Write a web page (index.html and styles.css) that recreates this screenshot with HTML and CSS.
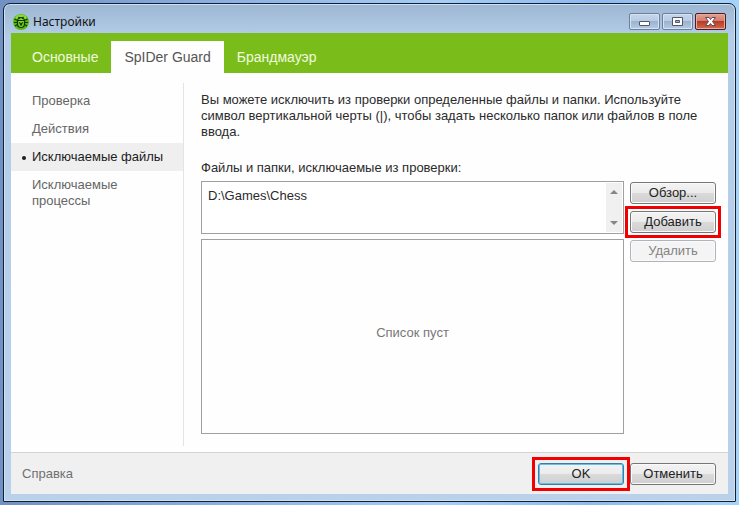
FILE: index.html
```html
<!DOCTYPE html>
<html lang="ru">
<head>
  <meta charset="UTF-8" />
  <meta name="viewport" content="width=device-width, initial-scale=1.0" />
  <title>Настройки</title>
  <link rel="stylesheet" href="styles.css">
</head>
<body>
  <div class="window">
    <!-- Title Bar -->
    <header class="title-bar">
      <svg class="app-icon" viewBox="0 0 16 16" aria-hidden="true">
        <circle cx="8" cy="8" r="8" fill="#58b80c" />
        <ellipse cx="8" cy="3.500" rx="5.500" ry="3" fill="#8ad83c" />
        <path d="M4.500 7.500C4.500 4.500 6 3.500 8 3.500s3.500 1 3.500 4v2C11.500 12 10 13.500 8 13.500S4.500 12 4.500 9.500z" fill="#7fd42a" stroke="#123a08" stroke-width="1.200" />
        <path d="M4.500 6.500h7M5.500 3l1.500 1.500M10.500 3L9 4.500M1.500 5l3 1.500M14.500 5l-3 1.500M1 8.500h3.500M15 8.500h-3.500M2 12l2.500-1.500M14 12l-2.500-1.500" fill="none" stroke="#123a08" stroke-width="1.200" />
        <path d="M6 8.500l1.500 1v2M10 8.500l-1.500 1v2" fill="none" stroke="#123a08" stroke-width="1.200" />
      </svg>
      <h1 class="title">Настройки</h1>
      <div class="window-buttons">
        <button class="window-btn" aria-label="Свернуть">
          <svg width="29" height="15" viewBox="0 0 29 15"><rect x="9.500" y="7.500" width="10" height="4" rx="0.500" fill="#fff" stroke="#535666" /></svg>
        </button>
        <button class="window-btn" aria-label="Развернуть">
          <svg width="29" height="15" viewBox="0 0 29 15"><path d="M9.500 3.500h10v8h-10zM12.500 6.500v2h4v-2z" fill="#fff" fill-rule="evenodd" stroke="#535666" /></svg>
        </button>
        <button class="window-btn close-btn" aria-label="Закрыть">
          <svg width="29" height="15" viewBox="0 0 29 15"><path d="M9.500 3.500h3.500l1.500 2 1.500-2h3.500l-3 4 3 4H16l-1.500-2-1.500 2H9.500l3-4z" fill="#fff" stroke="#5c4a58" /></svg>
        </button>
      </div>
    </header>

    <div class="client">
      <!-- Tabs -->
      <nav class="tabs">
        <a class="tab" href="#">Основные</a>
        <a class="tab active" href="#">SpIDer Guard</a>
        <a class="tab" href="#">Брандмауэр</a>
      </nav>

      <div class="content">
        <!-- Sections -->
        <nav class="sidebar">
          <a class="section" href="#">Проверка</a>
          <a class="section" href="#">Действия</a>
          <a class="section active" href="#">Исключаемые файлы</a>
          <a class="section" href="#">Исключаемые процессы</a>
        </nav>

        <main class="panel">
          <p class="description">Вы можете исключить из проверки определенные файлы и папки. Используйте символ вертикальной черты (|), чтобы задать несколько папок или файлов в поле ввода.</p>
          <label class="field-label" for="paths">Файлы и папки, исключаемые из проверки:</label>
          <div class="exclusions">
            <div class="lists">
              <div class="path-box">
                <textarea class="path-input" id="paths" spellcheck="false">D:\Games\Chess</textarea>
                <div class="scrollbar" aria-hidden="true">
                  <svg width="8" height="4" viewBox="0 0 8 4"><path d="M0 4l4-4 4 4z" fill="#868686" /></svg>
                  <svg width="8" height="4" viewBox="0 0 8 4"><path d="M0 0l4 4 4-4z" fill="#868686" /></svg>
                </div>
              </div>
              <div class="excluded-list">Список пуст</div>
            </div>
            <div class="actions">
              <button class="btn">Обзор...</button>
              <span class="highlight"><button class="btn">Добавить</button></span>
              <button class="btn" disabled>Удалить</button>
            </div>
          </div>
        </main>
      </div>

      <!-- Bottom Bar -->
      <footer class="footer">
        <a class="help" href="#">Справка</a>
        <span class="highlight wide"><button class="btn default">OK</button></span>
        <button class="btn">Отменить</button>
      </footer>
    </div>
  </div>
</body>
</html>
```
FILE: styles.css
```css
* {
  box-sizing: border-box;
}

body {
  margin: 0;
  height: 100vh;
  padding: 3px;
  display: flex;
  font-family: "Liberation Sans", Arial, sans-serif;
  font-size: 13px;
  line-height: 16px;
  color: #2b2b2b;
  background: linear-gradient(90deg, #7190c4, #8cb0e4 30%, #a5cdf8 60%, #8fb9f2 80%, #a5d4fa);
}

a {
  color: inherit;
  text-decoration: none;
}

button,
textarea {
  font: inherit;
  color: inherit;
}

.window {
  flex: 1;
  display: flex;
  flex-direction: column;
  padding: 0 7px 7px;
  border: 1px solid #14202e;
  border-radius: 7px 7px 1px 1px;
  background: linear-gradient(#9db7d3, #b3cce8 32px, #b9d1ea);
  box-shadow: inset 0 0 0 1px #cfe2f4;
}

/* Title bar */
.title-bar {
  height: 29px;
  display: flex;
  align-items: center;
  padding: 6px 2px 0;
}

.app-icon {
  width: 16px;
  height: 16px;
}

.title {
  flex: 1;
  margin: 0 0 0 4px;
  font-family: "Noto Sans", sans-serif;
  font-size: 12px;
  font-weight: normal;
  color: #111;
}

.window-buttons {
  display: flex;
  gap: 2px;
}

.window-btn {
  width: 31px;
  height: 17px;
  padding: 0;
  display: flex;
  align-items: center;
  justify-content: center;
  border: 1px solid #6b7f9b;
  border-radius: 2px;
  background: linear-gradient(#c6d7ea, #b6cae1 50%, #9bb3d0 50%, #b4cbe4);
  box-shadow: inset 0 0 0 1px #d5e3f2;
}

.window-btn svg {
  flex: none;
}

.close-btn {
  border-color: #4d1b22;
  background: linear-gradient(#e2a094, #d37a69 50%, #bb3a24 50%, #cf6c50);
  box-shadow: inset 0 0 0 1px #e5aca0;
}

/* Client area */
.client {
  flex: 1;
  display: flex;
  flex-direction: column;
  background: #fefefe;
}

.tabs {
  height: 40px;
  padding: 8px 8px 0;
  display: flex;
  background: #7abd1a;
}

.tab {
  padding: 8px 13px;
  font-size: 14px;
  color: #f0fadf;
}

.tab.active {
  color: #555;
  background: #fefefe;
}

.content {
  flex: 1;
  display: flex;
}

.sidebar {
  width: 173px;
  margin: 10px 0 6px;
  padding-top: 4px;
  border-right: 1px solid #e4e4e4;
}

.section {
  display: block;
  padding: 6px 12px 6px 21px;
  color: #666;
}

.section.active {
  position: relative;
  color: #1c1c1c;
  background: #efefef;
}

.section.active::before {
  content: "";
  position: absolute;
  left: 11px;
  top: 13px;
  width: 4px;
  height: 4px;
  border-radius: 50%;
  background: #1c1c1c;
}

.panel {
  flex: 1;
  display: flex;
  flex-direction: column;
  padding: 19px 12px 18px 17px;
}

.description {
  margin: 0 0 20px;
}

.field-label {
  margin-bottom: 5px;
}

.exclusions {
  flex: 1;
  display: flex;
  gap: 6px;
}

.lists {
  flex: 1;
  display: flex;
  flex-direction: column;
  gap: 5px;
}

.path-box {
  height: 53px;
  display: flex;
  padding: 1px;
  border: 1px solid #a0a0a0;
  background: #fff;
}

.path-input {
  flex: 1;
  padding: 5px;
  border: none;
  outline: none;
  resize: none;
  overflow: hidden;
  background: none;
}

.scrollbar {
  width: 16px;
  padding: 7px 0;
  display: flex;
  flex-direction: column;
  align-items: center;
  justify-content: space-between;
  background: #f0f0f0;
}

.excluded-list {
  flex: 1;
  display: flex;
  align-items: center;
  justify-content: center;
  padding-bottom: 8px;
  border: 1px solid #a0a0a0;
  color: #777;
}

.actions {
  display: flex;
  flex-direction: column;
  gap: 7px;
  padding-top: 1px;
}

/* Buttons */
.btn {
  display: block;
  width: 86px;
  height: 22px;
  padding: 0;
  border: 1px solid #777;
  border-radius: 3px;
  color: #222;
  background: linear-gradient(#f3f3f3, #ebebeb 50%, #dadada 50%, #d0d0d0);
  box-shadow: inset 0 0 0 1px #fafafa;
}

.btn.default {
  border-color: #3a7ea8;
  box-shadow: inset 0 0 0 1px #5cc2ea;
}

.btn:disabled {
  border-color: #b0b4b8;
  color: #838383;
  background: #f4f4f4;
}

.highlight {
  position: relative;
  z-index: 1;
  outline: 3px solid #f00000;
  outline-offset: 2px;
}

.highlight.wide {
  outline-offset: 3px;
}

.footer {
  height: 42px;
  display: flex;
  align-items: center;
  gap: 6px;
  padding: 0 12px 0 11px;
  border-top: 1px solid #d4d4d4;
  background: #f0f0f0;
}

.help {
  margin-right: auto;
  color: #707070;
}
```
